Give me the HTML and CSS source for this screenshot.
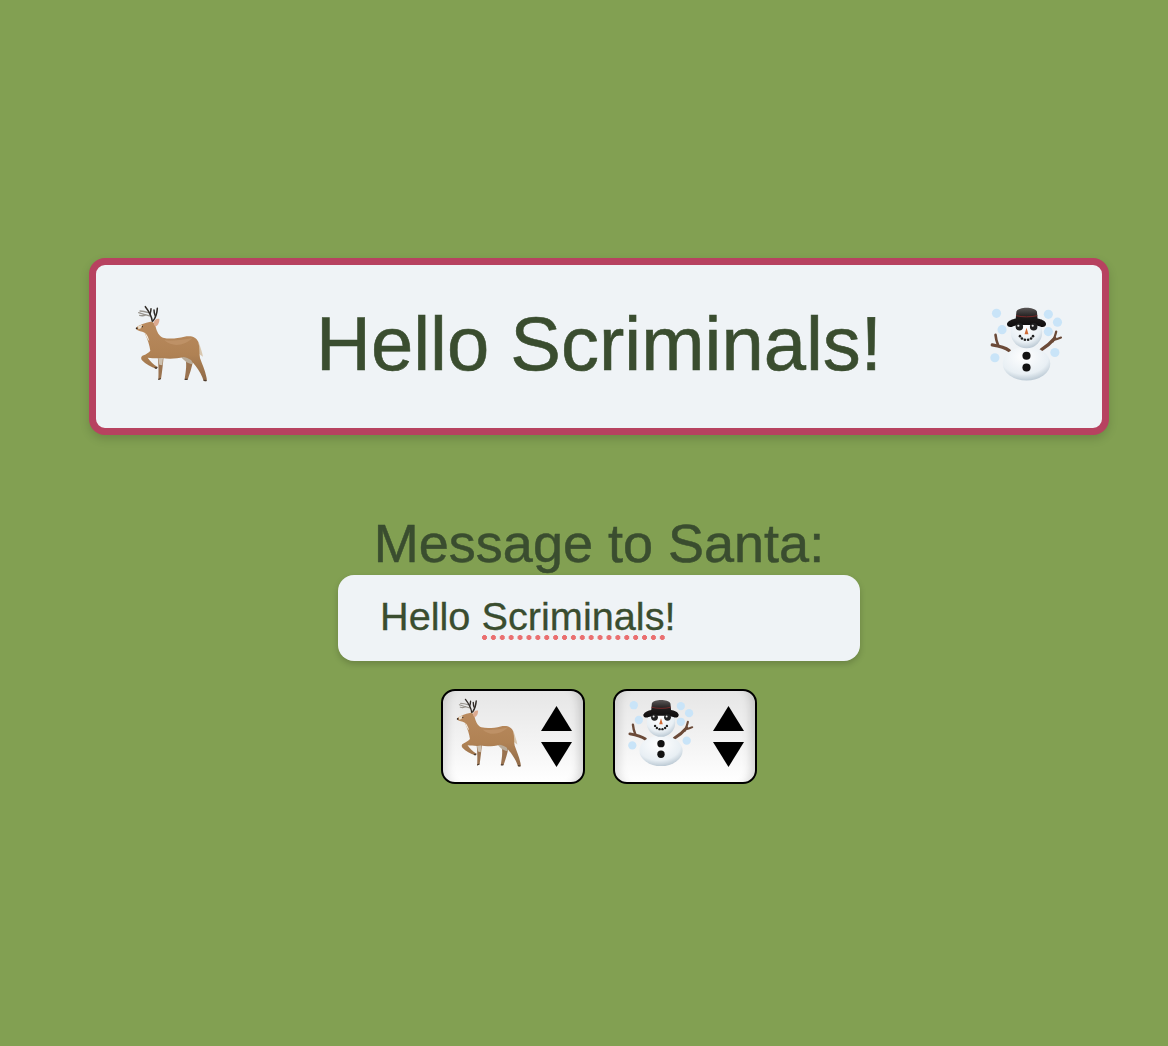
FILE: index.html
```html
<!DOCTYPE html>
<html lang="en">
<head>
<meta charset="utf-8">
<title>Hello Scriminals!</title>
<link rel="stylesheet" href="styles.css">
</head>
<body>
<svg class="defs" width="0" height="0" aria-hidden="true">
  <defs>
    <linearGradient id="hide" x1="0" y1="0" x2="0" y2="1">
      <stop offset="0" stop-color="#b98a5e"/>
      <stop offset="0.55" stop-color="#b08254"/>
      <stop offset="1" stop-color="#8f6a48"/>
    </linearGradient>
    <radialGradient id="snow" cx="0.45" cy="0.3" r="0.85">
      <stop offset="0" stop-color="#ffffff"/>
      <stop offset="0.6" stop-color="#e8eff4"/>
      <stop offset="1" stop-color="#9aadbc"/>
    </radialGradient>
    <linearGradient id="hat" x1="0" y1="0" x2="0" y2="1">
      <stop offset="0" stop-color="#5a5656"/>
      <stop offset="0.5" stop-color="#1f1c1c"/>
      <stop offset="1" stop-color="#0e0c0c"/>
    </linearGradient>
    <symbol id="deer" viewBox="165 160 225 240">
      <g fill="none" stroke-linecap="round">
        <g stroke="#9a968f" stroke-width="4">
          <path d="M214 196 C202 194 190 190 179 186"/>
          <path d="M208 186 C200 183 191 181 183 181"/>
          <path d="M200 192 C194 196 188 196 182 194"/>
        </g>
        <g stroke="#2f2a26" stroke-width="4.5">
          <path d="M220 212 C218 198 210 182 199 168"/>
          <path d="M213 190 C215 184 216 180 216 174"/>
          <path d="M223 210 C230 200 234 190 235 173"/>
          <path d="M229 196 C226 190 225 184 225 178"/>
        </g>
      </g>
      <path d="M358 272 C364 288 369 304 372 318 L360 310 Z" fill="#d8c6ae"/>
      <g fill="#9a7350">
        <path d="M320 325 L342 330 C339 350 331 372 326 387 L317 387 C319 368 324 350 320 325 Z"/>
        <path d="M236 316 L254 316 C252 342 249 366 246 385 L238 388 C239 365 239 340 236 316 Z"/>
      </g>
      <path d="M306 318 C318 312 332 310 337 318 L340 340 C330 340 316 332 306 318 Z" fill="#b9ab98"/>
      <path d="M237 320 L252 320 L250 344 L241 342 Z" fill="#cdc1b0"/>
      <path fill="url(#hide)" d="M172 230 C182 222 198 216 214 213 C222 212 228 218 230 228 C233 242 240 256 252 261 C272 266 296 263 316 258 C336 254 352 258 358 274 C363 292 360 308 363 322 C369 340 378 358 382 378 C384 386 384 391 381 392 L374 391 C370 376 360 360 350 346 C345 340 340 334 336 328 C328 324 322 320 314 319 C294 324 270 326 250 322 L238 323 C226 323 216 322 206 321 C214 332 224 342 236 349 L232 354 C216 350 200 340 189 329 C184 322 187 316 194 314 C202 310 209 306 214 300 C212 284 206 266 197 246 C188 241 178 241 173 237 Z"/>
      <path d="M256 268 C280 272 310 268 340 262 C320 284 280 292 256 268 Z" fill="#c49a70" opacity="0.6"/>
      <path d="M198 246 C205 252 209 262 211 272 C205 264 200 256 198 246 Z" fill="#f0e9de"/>
      <path d="M224 220 C224 209 232 203 241 205 C242 215 236 227 228 227 Z" fill="#dcaa90"/>
      <circle cx="190" cy="228" r="2" fill="#2c2420"/>
      <circle cx="173" cy="233" r="2.8" fill="#2c2420"/>
      <path d="M177 226 L190 222 L186 233 L178 236 Z" fill="#eadfce"/>
      <g fill="#4a3b30">
        <path d="M374 387 L383 388 L382 392 L374 391 Z"/>
        <path d="M317 384 L326 384 L325 388 L317 388 Z"/>
        <path d="M238 384 L246 382 L245 386 L238 388 Z"/>
        <path d="M226 350 L236 349 L234 354 L228 354 Z"/>
      </g>
    </symbol>
    <symbol id="snowman" viewBox="110 160 230 240">
      <g fill="#c9e4f8">
        <circle cx="133" cy="186" r="14"/>
        <circle cx="150" cy="236" r="14"/>
        <circle cx="128" cy="322" r="14"/>
        <circle cx="292" cy="189" r="14"/>
        <circle cx="320" cy="213" r="14"/>
        <circle cx="292" cy="242" r="14"/>
        <circle cx="312" cy="306" r="14"/>
      </g>
      <g fill="none" stroke="#6b4a38" stroke-linecap="round">
        <path d="M172 300 C160 292 142 287 120 283" stroke-width="10"/>
        <path d="M138 284 C134 274 131 264 130 252" stroke-width="8"/>
        <path d="M270 298 C286 288 300 276 312 262" stroke-width="10"/>
        <path d="M306 272 C310 262 314 252 316 242" stroke-width="7"/>
        <path d="M308 268 C316 266 324 263 331 260" stroke-width="6"/>
      </g>
      <ellipse cx="225" cy="340" rx="73" ry="52" fill="url(#snow)"/>
      <circle cx="225" cy="245" r="48" fill="url(#snow)"/>
      <circle cx="225" cy="316" r="12.5" fill="#121212"/>
      <circle cx="225" cy="352" r="12.5" fill="#121212"/>
      <path d="M165 218 C170 208 182 204 192 202 L194 180 C202 165 248 165 257 180 L259 202 C270 204 282 208 285 218 C285 228 274 230 267 226 C250 220 200 220 183 226 C175 230 165 228 165 218 Z" fill="url(#hat)"/>
      <path d="M193 193 C212 198 238 198 258 193" fill="none" stroke="#7d2a2a" stroke-width="3"/>
      <circle cx="203" cy="227" r="11.5" fill="#202020"/>
      <circle cx="247" cy="227" r="11.5" fill="#202020"/>
      <circle cx="200" cy="224" r="3.4" fill="#e8e8e8"/>
      <circle cx="244" cy="224" r="3.4" fill="#e8e8e8"/>
      <path d="M219 250 L225 230 L231 250 Z" fill="#cf6a35"/>
      <g fill="#1f1f1f">
        <circle cx="205" cy="256" r="4"/>
        <circle cx="211" cy="263" r="4"/>
        <circle cx="220" cy="267" r="4"/>
        <circle cx="230" cy="267" r="4"/>
        <circle cx="239" cy="263" r="4"/>
        <circle cx="245" cy="256" r="4"/>
      </g>
    </symbol>
    <symbol id="arrows" viewBox="0 0 31 61">
      <path d="M15.5 0 L31 25 L0 25 Z"/>
      <path d="M0 36 L31 36 L15.5 61 Z"/>
    </symbol>
  </defs>
</svg>
<main class="page">
  <header class="banner">
    <svg class="banner-deer" role="img" aria-label="deer"><use href="#deer"/></svg>
    <h1 class="title">Hello Scriminals!</h1>
    <svg class="banner-snowman" role="img" aria-label="snowman"><use href="#snowman"/></svg>
  </header>
  <form class="form">
    <label class="label">Message to Santa:</label>
    <div class="message"><span>Hello <span class="misspelled">Scriminals</span>!</span></div>
    <div class="pickers">
      <div class="picker">
        <svg class="picker-emoji" role="img" aria-label="deer"><use href="#deer"/></svg>
        <svg class="picker-arrows" aria-hidden="true"><use href="#arrows"/></svg>
      </div>
      <div class="picker">
        <svg class="picker-emoji" role="img" aria-label="snowman"><use href="#snowman"/></svg>
        <svg class="picker-arrows" aria-hidden="true"><use href="#arrows"/></svg>
      </div>
    </div>
  </form>
</main>
</body>
</html>
```
FILE: styles.css
```css
* { box-sizing: border-box; }
html, body { margin: 0; height: 100%; }
body {
  background: #82a052;
  color: #3a4d2f;
  font-family: "Liberation Sans", Arial, sans-serif;
  overflow: hidden;
}
.defs { position: absolute; }
.page {
  display: flex;
  flex-direction: column;
  align-items: center;
  padding: 258px 59px 0 89px;
}
.banner {
  width: 100%;
  height: 177px;
  display: flex;
  align-items: center;
  justify-content: space-between;
  padding: 0 38px 5px;
  background: #eff3f6;
  border: 7.5px solid #b74260;
  border-radius: 16px;
  box-shadow: 0 4px 10px rgba(0, 0, 0, 0.15);
}
.banner-deer, .banner-snowman { width: 75px; height: 80px; flex: none; }
.title {
  margin: 0;
  font-size: 76px;
  font-weight: 400;
  line-height: 1;
  -webkit-text-stroke: 0.6px #3a4d2f;
}
.form {
  margin-top: 79px;
  display: flex;
  flex-direction: column;
  align-items: center;
}
.label {
  font-size: 54px;
  line-height: 59px;
  margin-bottom: 2px;
  -webkit-text-stroke: 0.5px #3a4d2f;
}
.message {
  width: 522px;
  height: 86px;
  display: flex;
  align-items: center;
  padding: 0 42px 4px;
  font-size: 39.7px;
  -webkit-text-stroke: 0.3px #3a4d2f;
  background: #eff3f6;
  border-radius: 16px;
  box-shadow: 0 3px 6px rgba(0, 0, 0, 0.18);
}
.misspelled { position: relative; }
.misspelled::after {
  content: "";
  position: absolute;
  left: 1px;
  right: -1px;
  bottom: -2px;
  height: 5px;
  background: radial-gradient(circle at 2.5px 2.5px, #ea6f70 2.2px, transparent 2.7px) 0 0 / 8.9px 5px repeat-x;
}
.pickers {
  display: flex;
  gap: 28px;
  margin-top: 28px;
}
.picker {
  width: 144px;
  height: 95px;
  display: flex;
  align-items: center;
  justify-content: space-between;
  padding: 0 11px 0 12px;
  border: 2px solid #000;
  border-radius: 14px;
  background: linear-gradient(#e6e6e6, #f4f4f4 60%, #ffffff);
  box-shadow: inset 14px 0 10px -10px rgba(0, 0, 0, 0.12), inset -14px 0 10px -10px rgba(0, 0, 0, 0.16);
}
.picker-emoji { width: 68px; height: 72px; flex: none; margin-bottom: 8px; }
.picker-arrows { width: 31px; height: 61px; fill: #000; flex: none; }
```
